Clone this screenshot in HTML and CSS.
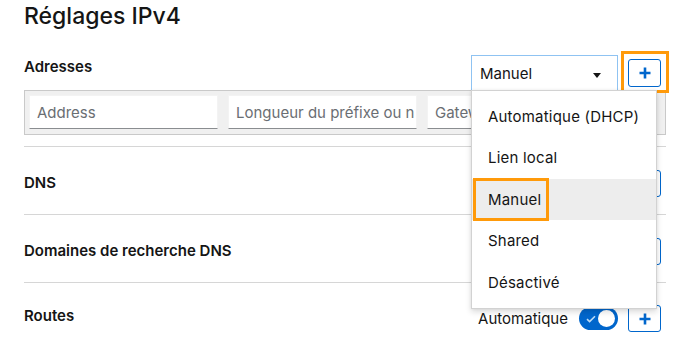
FILE: index.html
```html
<!DOCTYPE html>
<html lang="fr">
<head>
<meta charset="utf-8">
<title>Réglages IPv4</title>
<link rel="stylesheet" href="styles.css">
</head>
<body>
<div class="page">
  <h1 class="title">Réglages IPv4</h1>

  <section class="addresses">
    <div class="addr-head">
      <span class="label">Adresses</span>
      <div class="controls">
        <div class="select">
          <span class="select-text">Manuel</span>
          <span class="caret"></span>
        </div>
        <div class="hl-wrap">
          <button class="plus"><svg viewBox="0 0 12 12" width="12" height="12"><path d="M6 0.5v11M0.5 6h11" stroke="#0066cc" stroke-width="2.6"/></svg></button>
          <span class="hl hl-btn"></span>
        </div>
      </div>
    </div>
    <div class="addr-group">
      <div class="field">Address</div>
      <div class="field">Longueur du préfixe ou n</div>
      <div class="field">Gateway</div>
      <button class="minus"></button>
    </div>
  </section>

  <div class="row">
    <span class="label">DNS</span>
    <button class="plus"><svg viewBox="0 0 12 12" width="12" height="12"><path d="M6 0.5v11M0.5 6h11" stroke="#0066cc" stroke-width="2.6"/></svg></button>
  </div>
  <div class="row">
    <span class="label">Domaines de recherche DNS</span>
    <button class="plus"><svg viewBox="0 0 12 12" width="12" height="12"><path d="M6 0.5v11M0.5 6h11" stroke="#0066cc" stroke-width="2.6"/></svg></button>
  </div>
  <div class="row routes">
    <span class="label">Routes</span>
    <div class="route-controls">
      <span class="auto">Automatique</span>
      <span class="toggle"><svg class="check" viewBox="0 0 10 8" width="10" height="8"><path d="M1 4.2l2.6 2.4L9 1.2" fill="none" stroke="#bfdcf5" stroke-width="1.6"/></svg><span class="knob"></span></span>
      <button class="plus"><svg viewBox="0 0 12 12" width="12" height="12"><path d="M6 0.5v11M0.5 6h11" stroke="#0066cc" stroke-width="2.6"/></svg></button>
    </div>
  </div>

  <ul class="menu">
    <li class="item">Automatique (DHCP)</li>
    <li class="item">Lien local</li>
    <li class="item selected">Manuel<span class="hl hl-item"></span></li>
    <li class="item">Shared</li>
    <li class="item">Désactivé</li>
  </ul>
</div>
</body>
</html>
```
FILE: styles.css
```css
* { box-sizing: border-box; }
html, body { margin: 0; padding: 0; background: #fff; }
body {
  font-family: Inter, "Noto Sans", sans-serif;
  color: #151515;
  width: 699px;
  height: 355px;
  overflow: hidden;
}
.page {
  position: relative;
  padding: 2px 33px 0 24px;
}
.title {
  margin: 0;
  font-size: 23px;
  font-weight: 500;
  line-height: 29px;
}
.label {
  font-size: 15px;
  font-weight: 600;
  line-height: 22px;
}
.addresses { margin-top: 24px; }
.addr-head {
  display: flex;
  justify-content: space-between;
  align-items: flex-start;
}
.addr-head .label { margin-top: 1px; }
.controls {
  display: flex;
  align-items: center;
  gap: 10px;
  margin-right: 5px;
}
.select {
  width: 147px;
  height: 35px;
  border: 1px solid #8fc3f2;
  border-bottom: none;
  display: flex;
  align-items: center;
  justify-content: space-between;
  padding: 0 16px 0 8px;
  font-size: 15px;
}
.caret {
  width: 0; height: 0;
  border-left: 4px solid transparent;
  border-right: 4px solid transparent;
  border-top: 5px solid #151515;
  margin-top: 4px;
}
.hl-wrap { position: relative; display: flex; }
.hl {
  position: absolute;
  border: 3px solid #ff9a0a;
  pointer-events: none;
}
.hl-btn { left: -7px; top: -8px; right: -8px; bottom: -6px; }
.plus {
  width: 33px;
  height: 27px;
  border: 1px solid #0066cc;
  border-radius: 3px;
  background: #fff;
  display: flex;
  align-items: center;
  justify-content: center;
  padding: 0;
}
.controls .plus { height: 28px; }
.addr-group {
  display: flex;
  gap: 10px;
  height: 45px;
  padding: 4px 8px 6px 4px;
  background: #f0f0f0;
  border: 1px solid #c9c9c9;
}
.field {
  width: 189px;
  height: 34px;
  background: #fff;
  border: 1px solid #f3f3f3;
  border-bottom: 1px solid #8a8d90;
  font-size: 15px;
  color: #6a6e73;
  line-height: 33px;
  padding-left: 7px;
  white-space: nowrap;
  overflow: hidden;
}
.minus {
  margin-left: auto;
  width: 30px;
  height: 26px;
  align-self: center;
  border: 1px solid #0066cc;
  border-radius: 3px;
  background: #fff;
  padding: 0;
}
.row {
  display: flex;
  justify-content: space-between;
  align-items: center;
  border-top: 1px solid #d6d6d6;
  padding: 23px 5px 17px 0;
}
.addresses + .row { margin-top: 11px; }
.row .label { margin-top: -2px; }
.row.routes { padding-top: 22px; }
.row.routes .label { margin-top: -6px; }
.route-controls {
  display: flex;
  align-items: center;
}
.auto { font-size: 15px; margin-right: 11px; }
.toggle {
  position: relative;
  width: 39px;
  height: 23px;
  border-radius: 12px;
  background: #0066cc;
  margin-right: 10px;
  display: flex;
  align-items: center;
}
.check { margin-left: 7px; }
.knob {
  position: absolute;
  right: 3px;
  top: 3px;
  width: 17px;
  height: 17px;
  border-radius: 50%;
  background: #fff;
}
.menu {
  position: absolute;
  left: 471px;
  top: 90px;
  width: 186px;
  margin: 0;
  padding: 5px 0 5px;
  list-style: none;
  background: #fff;
  border: 1px solid #d2d2d2;
  box-shadow: 0 3px 6px rgba(3, 3, 3, 0.14), 0 0 3px rgba(3,3,3,0.06);
}
.item {
  position: relative;
  height: 41.4px;
  line-height: 41.4px;
  padding-left: 16px;
  font-size: 15px;
  letter-spacing: 0.2px;
  white-space: nowrap;
}
.item.selected { background: #ededed; }
.hl-item { left: 1px; top: -1px; width: 76px; height: 43px; }
```
